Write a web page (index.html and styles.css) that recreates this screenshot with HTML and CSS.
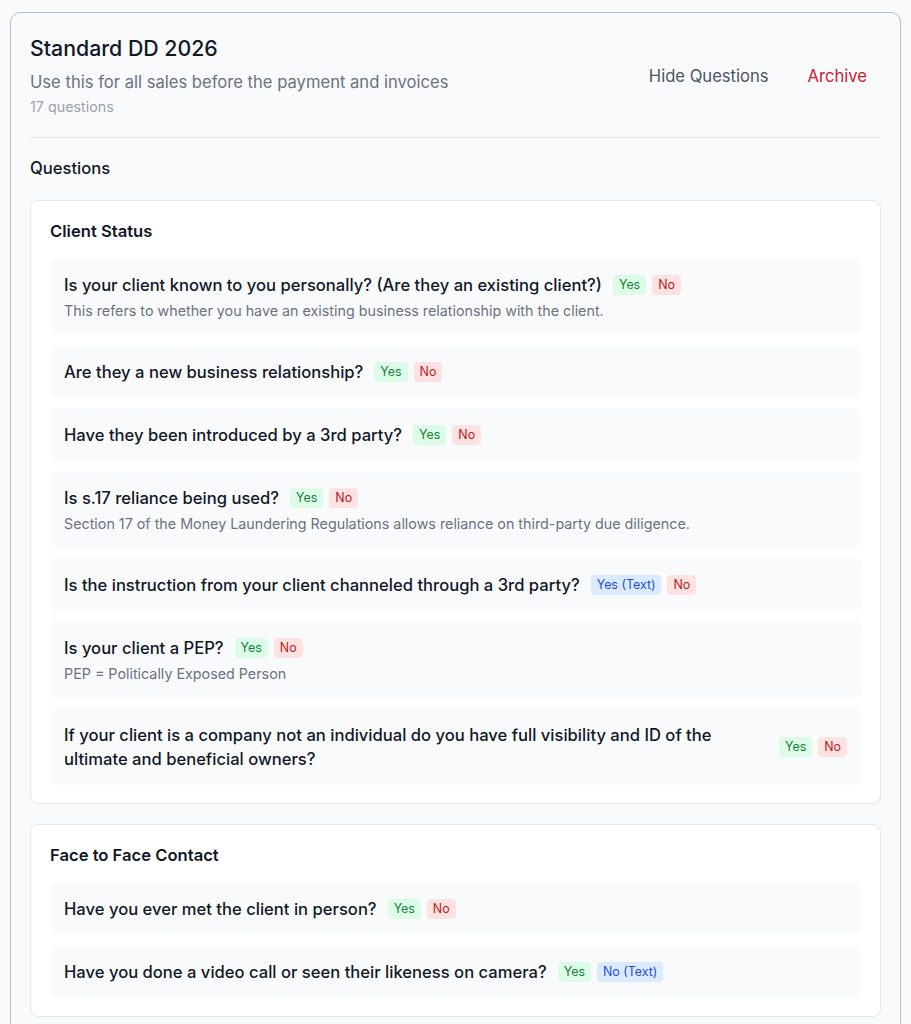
FILE: index.html
```html
<!DOCTYPE html>
<html lang="en">
<head>
    <meta charset="UTF-8">
    <meta name="viewport" content="width=device-width, initial-scale=1.0">
    <title>Standard DD 2026</title>
    <link rel="stylesheet" href="styles.css">
</head>
<body>

    <div class="template-card">
        <div class="template-header">
            <div class="template-info">
                <h1>Standard DD 2026</h1>
                <p class="template-desc">Use this for all sales before the payment and invoices</p>
                <p class="template-count">17 questions</p>
            </div>
            <div class="template-actions">
                <button class="btn-link">Hide Questions</button>
                <button class="btn-link danger">Archive</button>
            </div>
        </div>

        <h2 class="questions-title">Questions</h2>

        <!-- Client Status -->
        <div class="section">
            <h3>Client Status</h3>
            <div class="question">
                <div class="question-row">
                    <span class="question-text">Is your client known to you personally? (Are they an existing client?)</span>
                    <span class="badges"><span class="badge yes">Yes</span><span class="badge no">No</span></span>
                </div>
                <p class="question-help">This refers to whether you have an existing business relationship with the client.</p>
            </div>
            <div class="question">
                <div class="question-row">
                    <span class="question-text">Are they a new business relationship?</span>
                    <span class="badges"><span class="badge yes">Yes</span><span class="badge no">No</span></span>
                </div>
            </div>
            <div class="question">
                <div class="question-row">
                    <span class="question-text">Have they been introduced by a 3rd party?</span>
                    <span class="badges"><span class="badge yes">Yes</span><span class="badge no">No</span></span>
                </div>
            </div>
            <div class="question">
                <div class="question-row">
                    <span class="question-text">Is s.17 reliance being used?</span>
                    <span class="badges"><span class="badge yes">Yes</span><span class="badge no">No</span></span>
                </div>
                <p class="question-help">Section 17 of the Money Laundering Regulations allows reliance on third-party due diligence.</p>
            </div>
            <div class="question">
                <div class="question-row">
                    <span class="question-text">Is the instruction from your client channeled through a 3rd party?</span>
                    <span class="badges"><span class="badge text">Yes (Text)</span><span class="badge no">No</span></span>
                </div>
            </div>
            <div class="question">
                <div class="question-row">
                    <span class="question-text">Is your client a PEP?</span>
                    <span class="badges"><span class="badge yes">Yes</span><span class="badge no">No</span></span>
                </div>
                <p class="question-help">PEP = Politically Exposed Person</p>
            </div>
            <div class="question">
                <div class="question-row">
                    <span class="question-text">If your client is a company not an individual do you have full visibility and ID of the ultimate and beneficial owners?</span>
                    <span class="badges"><span class="badge yes">Yes</span><span class="badge no">No</span></span>
                </div>
            </div>
        </div>

        <!-- Face to Face Contact -->
        <div class="section">
            <h3>Face to Face Contact</h3>
            <div class="question">
                <div class="question-row">
                    <span class="question-text">Have you ever met the client in person?</span>
                    <span class="badges"><span class="badge yes">Yes</span><span class="badge no">No</span></span>
                </div>
            </div>
            <div class="question">
                <div class="question-row">
                    <span class="question-text">Have you done a video call or seen their likeness on camera?</span>
                    <span class="badges"><span class="badge yes">Yes</span><span class="badge text">No (Text)</span></span>
                </div>
            </div>
        </div>
    </div>

</body>
</html>
```

FILE: styles.css
```css
body {
    margin: 0;
    padding: 12px 10px;
    background-color: #fafafa;
    font-family: Inter, "Noto Sans", sans-serif;
    color: #111827;
}

.template-card {
    background-color: #f9fafb;
    border: 1px solid #a9bfe3;
    border-radius: 10px;
    padding: 21px 19px 20px;
}

.template-header {
    display: flex;
    justify-content: space-between;
    align-items: center;
    padding-bottom: 20px;
    border-bottom: 1px solid #e5e7eb;
}

.template-info h1 {
    margin: 0;
    font-size: 21.3px;
    line-height: 28px;
    font-weight: 500;
    color: #111827;
}

.template-desc {
    margin: 8px 0 0;
    font-size: 16.6px;
    line-height: 24px;
    color: #6b7280;
}

.template-count {
    margin: 3px 0 0;
    font-size: 14.3px;
    line-height: 20px;
    color: #9ca3af;
}

.template-actions {
    display: flex;
    gap: 11px;
}

.btn-link {
    background: none;
    border: none;
    padding: 8px 14px;
    font-family: inherit;
    font-size: 16.6px;
    line-height: 24px;
    color: #4b5563;
    cursor: pointer;
}

.btn-link.danger {
    color: #c52233;
}

.questions-title {
    margin: 18px 0 20px;
    font-size: 16.6px;
    line-height: 24px;
    font-weight: 500;
    color: #111827;
}

.section {
    background-color: #fff;
    border: 1px solid #e5e7eb;
    border-radius: 8px;
    padding: 18px 19px 18px;
    display: flex;
    flex-direction: column;
    gap: 10px;
    margin-bottom: 20px;
}

.section h3 {
    margin: 0 0 5px;
    font-size: 16.6px;
    line-height: 24px;
    font-weight: 600;
    color: #111827;
}

.question {
    background-color: #f9fafb;
    border-radius: 8px;
    padding: 15px 14px 14px;
}

.question-row {
    display: flex;
    align-items: center;
    gap: 11px;
}

.question-text {
    font-size: 16.6px;
    line-height: 24px;
    font-weight: 500;
    color: #111827;
}

.question-help {
    margin: 4px 0 0;
    font-size: 14.3px;
    line-height: 20px;
    color: #6b7280;
}

.badges {
    display: flex;
    gap: 6px;
    flex-shrink: 0;
}

.badge {
    font-size: 12.4px;
    line-height: 20px;
    padding: 0 6px;
    border-radius: 4px;
}

.badge.yes {
    background-color: #dcfce7;
    color: #15803d;
}

.badge.no {
    background-color: #fee2e2;
    color: #b91c1c;
}

.badge.text {
    background-color: #dbeafe;
    color: #1d4ed8;
}
```
